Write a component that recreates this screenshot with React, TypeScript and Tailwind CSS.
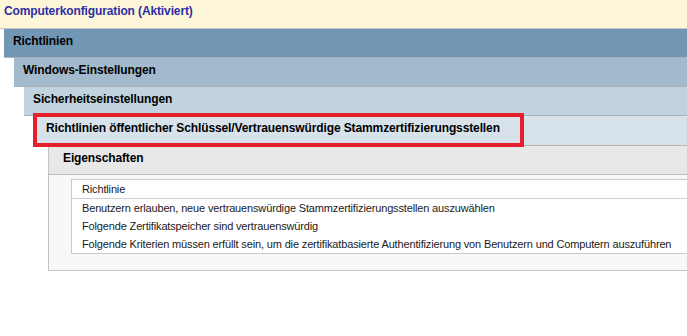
import React from 'react';

const bands = [
  { label: 'Richtlinien', indent: 'ml-[4px]', bg: 'bg-[#7297b4]', pad: 'pl-[9px]' },
  { label: 'Windows-Einstellungen', indent: 'ml-[14px]', bg: 'bg-[#a3bacc]', pad: 'pl-[9px]' },
  { label: 'Sicherheitseinstellungen', indent: 'ml-[24px]', bg: 'bg-[#c0d3df]', pad: 'pl-[9px]' },
];

const rows = [
  'Benutzern erlauben, neue vertrauenswürdige Stammzertifizierungsstellen auszuwählen',
  'Folgende Zertifikatspeicher sind vertrauenswürdig',
  'Folgende Kriterien müssen erfüllt sein, um die zertifikatbasierte Authentifizierung von Benutzern und Computern auszuführen',
];

export default function App() {
  return (
    <div className="w-[687px] h-[336px] bg-white overflow-hidden font-['Liberation_Sans',Arial,sans-serif] text-[11px]">
      <div className="h-[29px] bg-[#fdf6d8] pl-[4px] pt-[4px] leading-[14px] text-[12px] tracking-[-0.12px] font-bold text-[#2e2ea6] border-b border-[#c8c8c0]">
        Computerkonfiguration (Aktiviert)
      </div>

      {bands.map((b) => (
        <div
          key={b.label}
          className={`${b.indent} ${b.bg} ${b.pad} h-[29px] pt-[5px] leading-[14px] text-[12px] tracking-[-0.12px] font-bold text-black border-b border-[#a9b0b6]`}
        >
          {b.label}
        </div>
      ))}

      <div className="relative ml-[34px] h-[30px] bg-[#d7e2ea] pl-[12px] pt-[5px] leading-[14px] text-[12px] tracking-[-0.12px] font-bold text-black border-b border-[#b4b4b4]">
        Richtlinien öffentlicher Schlüssel/Vertrauenswürdige Stammzertifizierungsstellen
        <div className="absolute left-[-1px] top-[-3px] w-[491px] h-[34px] border-4 border-[#e3202b]" />
      </div>

      <div className="ml-[48px] border-l border-b border-[#c4c4c4]">
        <div className="h-[29px] bg-[#e8e8e8] pl-[14px] pt-[5px] leading-[14px] text-[12px] tracking-[-0.12px] font-bold text-black border-b border-[#bdbdbd]">
          Eigenschaften
        </div>
        <div className="bg-[#f8f8f8] pt-[4px] pb-[16px] pl-[22px]">
          <div className="bg-white border-t border-l border-b border-[#c9c9c9] text-[#1a1a1a] tracking-[-0.15px]">
            <div className="h-[19px] pl-[10px] pt-[2px] leading-[14px] border-b border-[#d0d0d0]">Richtlinie</div>
            {rows.map((r) => (
              <div key={r} className="h-[18px] pl-[10px] pt-[2px] leading-[14px] whitespace-nowrap">
                {r}
              </div>
            ))}
          </div>
        </div>
      </div>
    </div>
  );
}
